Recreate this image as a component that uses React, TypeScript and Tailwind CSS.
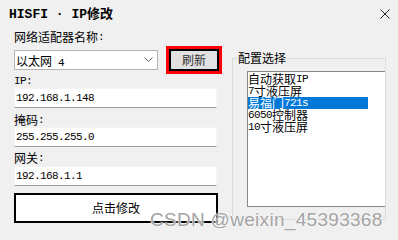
import React from 'react';

const CJK = /([\u3000-\u9fff\uff00-\uffef]+)/;

// SimSun-like mix: CJK at 12px, latin in a narrow mono
function Txt({ s }: { s: string }) {
  const parts = s.split(CJK).filter(Boolean);
  return (
    <>
      {parts.map((p, i) =>
        CJK.test(p) ? (
          <span key={i} className="font-['Noto_Sans_CJK_SC',sans-serif] text-[12px] leading-[12px]">
            {p}
          </span>
        ) : (
          <span key={i} className="font-['Liberation_Mono',monospace] text-[11px] leading-[12px] tracking-[-0.6px] whitespace-pre">
            {p}
          </span>
        )
      )}
    </>
  );
}

function Field({ value }: { value: string }) {
  return (
    <div className="h-[20px] w-[203px] bg-white border border-[#f4f4f4] border-b-[#a0a0a0] flex items-center pl-[1px]">
      <Txt s={value} />
    </div>
  );
}

const configs = ['自动获取IP', '7寸液压屏', '易福门721s', '6050控制器', '10寸液压屏'];

export default function App() {
  const selected = 2;

  return (
    <div className="relative w-[398px] h-[240px] bg-[#f0f0f0] text-black overflow-hidden leading-none">
      {/* title bar */}
      <div className="h-[28px] flex items-center justify-between pl-[9px] pr-[8px]">
        <span className="font-['Liberation_Mono','Noto_Sans_CJK_SC',monospace] font-bold text-[13px] whitespace-pre">
          HISFI · IP修改
        </span>
        <svg width="10" height="10" viewBox="0 0 10 10" className="text-[#222]">
          <path d="M0.5 0.5 L9.5 9.5 M9.5 0.5 L0.5 9.5" stroke="currentColor" strokeWidth="1" fill="none" />
        </svg>
      </div>

      <div className="flex items-start">
        {/* left column */}
        <div className="ml-[14px] w-[208px] flex flex-col">
          <div className="mt-[2px] h-[14px] flex items-center">
            <Txt s="网络适配器名称:" />
          </div>

          <div className="mt-[2px] h-[28px] flex items-center gap-[8px]">
            <div className="h-[20px] w-[144px] bg-white border border-[#b4b4b4] flex items-center justify-between pl-[1px] pr-[4px]">
              <span>
                <Txt s="以太网 4" />
              </span>
              <svg width="9" height="6" viewBox="0 0 9 6">
                <path d="M0.5 0.5 L4.5 4.5 L8.5 0.5" stroke="#606060" strokeWidth="1" fill="none" />
              </svg>
            </div>
            <div className="h-[28px] w-[56px] border-[3px] border-[#ff0000]">
              <button className="h-full w-full border-2 border-black bg-[#e1e1e1] flex items-center justify-center text-[#333]">
                <Txt s="刷新" />
              </button>
            </div>
          </div>

          <div className="h-[14px] flex items-center">
            <Txt s="IP:" />
          </div>
          <Field value="192.168.1.148" />

          <div className="mt-[4px] h-[15px] flex items-center">
            <Txt s="掩码:" />
          </div>
          <Field value="255.255.255.0" />

          <div className="mt-[3px] h-[16px] flex items-center">
            <Txt s="网关:" />
          </div>
          <Field value="192.168.1.1" />

          <button className="mt-[7px] h-[30px] w-[204px] bg-white border-2 border-black flex items-center justify-center">
            <Txt s="点击修改" />
          </button>
        </div>

        {/* config group */}
        <fieldset className="ml-[10px] mt-[23px] w-[152px] border border-[#dcdcdc] pb-[12px]">
          <legend className="ml-[5px] h-[14px] flex items-center">
            <Txt s="配置选择" />
          </legend>
          <div className="mt-[6px] ml-[14px] w-[138px] h-[136px] bg-white border-l border-t border-b border-[#828790] pt-[1px]">
            {configs.map((c, i) => (
              <div
                key={c}
                className={
                  'h-[12px] w-[120px] flex items-center ' +
                  (i === selected ? 'bg-[#0078d7] text-white' : '')
                }
              >
                <Txt s={c} />
              </div>
            ))}
          </div>
        </fieldset>
      </div>

      {/* watermark */}
      <div className="absolute left-[150px] top-[210px] font-['Liberation_Sans',Arial,sans-serif] text-[19px] tracking-[0.3px] leading-none text-[#a3a3a3] whitespace-nowrap [text-shadow:0_0_2px_#ffffff,0_0_1px_#ffffff]">
        CSDN @weixin_45393368
      </div>
    </div>
  );
}
